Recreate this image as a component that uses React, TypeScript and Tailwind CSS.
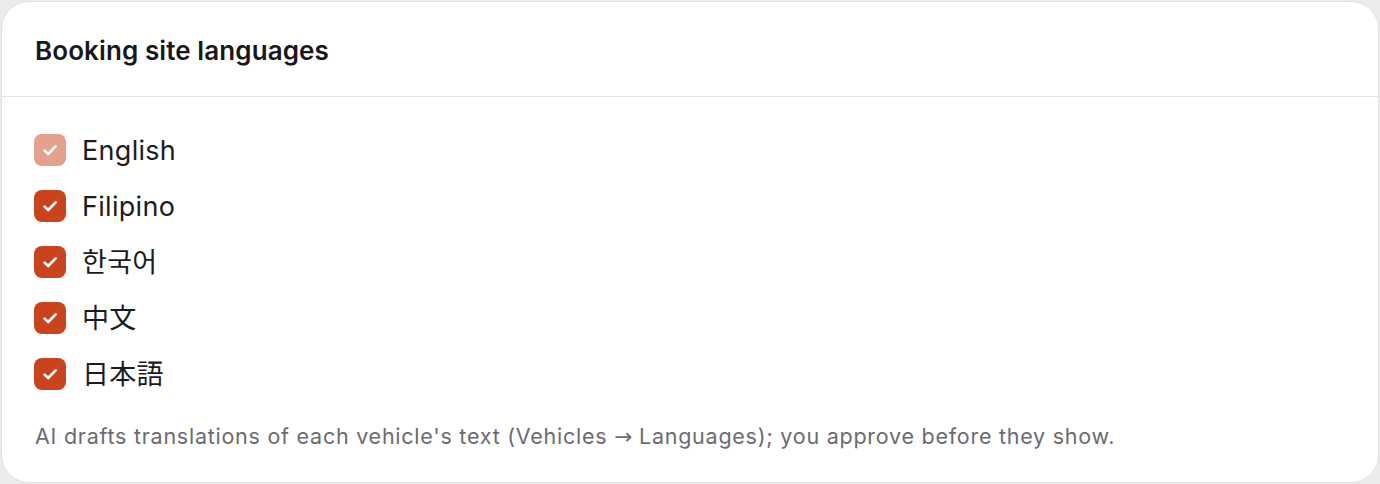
import React, { useState } from 'react';

type Lang = {
  code: string;
  label: string;
  locked?: boolean;
};

const LANGS: Lang[] = [
  { code: 'en', label: 'English', locked: true },
  { code: 'fil', label: 'Filipino' },
  { code: 'ko', label: '한국어' },
  { code: 'zh', label: '中文' },
  { code: 'ja', label: '日本語' },
];

const CheckIcon = () => (
  <svg width="24" height="24" viewBox="0 0 24 24" fill="none" stroke="white" strokeWidth="2.6" strokeLinecap="round" strokeLinejoin="round">
    <path d="M6.6 12.6l3.6 3.4L17.6 8.4" />
  </svg>
);

const App: React.FC = () => {
  const [checked, setChecked] = useState<Set<string>>(new Set(LANGS.map((l) => l.code)));

  const toggle = (code: string) => {
    setChecked((prev) => {
      const next = new Set(prev);
      if (next.has(code)) next.delete(code);
      else next.add(code);
      return next;
    });
  };

  return (
    <div
      className="w-[1380px] h-[484px] bg-[#ececec] p-px"
      style={{ fontFamily: "Inter, 'Noto Sans CJK KR', 'Noto Sans CJK SC', sans-serif" }}
    >
      <div className="h-[482px] bg-white border border-[#e2e2e2] rounded-[28px] flex flex-col">
        <div className="h-[95px] px-[33px] flex items-center border-b border-[#e4e4e4]">
          <h2 className="text-[26px] font-semibold text-[#18181b] tracking-[0.1px] pt-[2px]">Booking site languages</h2>
        </div>

        <div className="px-[32px] pt-[37px] flex flex-col gap-[24px]">
          {LANGS.map((lang) => {
            const on = checked.has(lang.code);
            return (
              <label key={lang.code} className="flex items-center gap-[16px] h-[32px]">
                <button
                  type="button"
                  disabled={lang.locked}
                  onClick={() => toggle(lang.code)}
                  className={`w-[32px] h-[32px] rounded-[8px] flex items-center justify-center ${
                    on ? 'bg-[#c9431d]' : 'bg-white border-2 border-gray-300'
                  } ${lang.locked ? 'opacity-50' : ''}`}
                >
                  {on && <CheckIcon />}
                </button>
                <span className="text-[27px] text-[#1c1c1f] tracking-[0.3px] pt-[2px]">{lang.label}</span>
              </label>
            );
          })}
        </div>

        <p className="px-[33px] mt-[30px] text-[21.5px] text-[#6b6b6e] tracking-[0.75px]">
          AI drafts translations of each vehicle's text (Vehicles{' '}
          <span style={{ fontFamily: "'DejaVu Sans', sans-serif" }} className="tracking-normal">→</span>{' '}
          Languages); you approve before they show.
        </p>
      </div>
    </div>
  );
};

export default App;
